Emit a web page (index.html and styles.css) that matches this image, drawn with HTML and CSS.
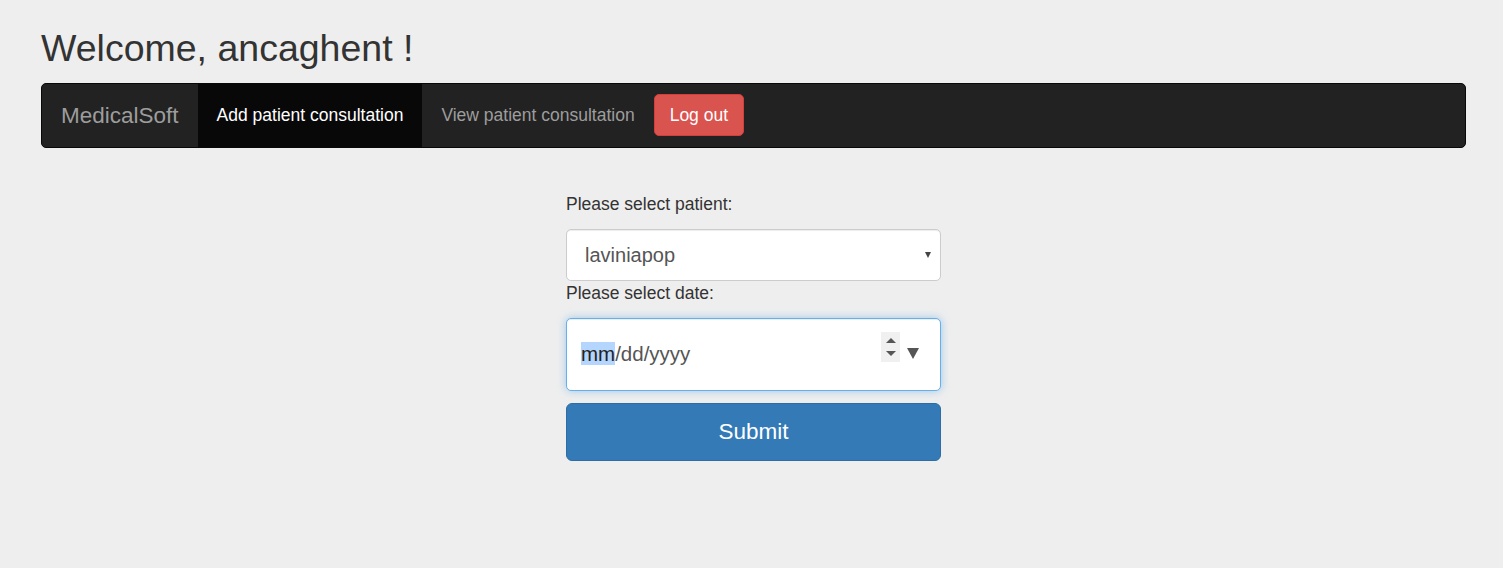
FILE: index.html
```html
<!DOCTYPE html>
<html lang="en">
<head>
<meta charset="utf-8">
<title>MedicalSoft</title>
<link rel="stylesheet" href="styles.css">
</head>
<body>
<div class="container">
  <h2 class="welcome">Welcome, ancaghent !</h2>
  <nav class="navbar">
    <a class="brand" href="#">MedicalSoft</a>
    <ul class="nav">
      <li class="active"><a href="#">Add patient consultation</a></li>
      <li><a href="#">View patient consultation</a></li>
      <li class="btn-item"><button class="btn btn-danger" type="button">Log out</button></li>
    </ul>
  </nav>
  <form class="consult-form">
    <label class="lbl">Please select patient:</label>
    <div class="select-wrap">
      <select class="form-control select-ctl">
        <option>laviniapop</option>
      </select>
    </div>
    <label class="lbl lbl-date">Please select date:</label>
    <div class="form-control date-ctl">
      <span class="date-text"><span class="seg-sel">mm</span>/dd/yyyy</span>
      <span class="spinner"><span class="spin-up"></span><span class="spin-down"></span></span>
      <span class="drop-tri"></span>
    </div>
    <button class="btn btn-primary btn-submit" type="button">Submit</button>
  </form>
</div>
</body>
</html>
```
FILE: styles.css
```css
html, body {
  margin: 0;
  padding: 0;
  background: #eeeeee;
}
body {
  font-family: "Liberation Sans", Arial, Helvetica, sans-serif;
  font-size: 17.5px;
  line-height: 25px;
  color: #333333;
}
.container {
  padding: 0 37px 0 41px;
}
.welcome {
  margin: 28px 0 14px;
  font-size: 37.5px;
  font-weight: 400;
  line-height: 41.25px;
  color: #333333;
}
.navbar {
  display: flex;
  align-items: stretch;
  height: 63px;
  background: #222222;
  border: 1px solid #080808;
  border-radius: 5px;
}
.brand {
  display: flex;
  align-items: center;
  padding: 0 19px;
  font-size: 22.5px;
  color: #9d9d9d;
  text-decoration: none;
  padding-bottom: 1px;
}
.nav {
  display: flex;
  align-items: stretch;
  list-style: none;
  margin: 0;
  padding: 0;
}
.nav li a {
  display: flex;
  align-items: center;
  height: 100%;
  box-sizing: border-box;
  padding: 0 19px;
  color: #9d9d9d;
  text-decoration: none;
}
.nav li.active a {
  background: #080808;
  color: #ffffff;
}
.nav .btn-item {
  display: flex;
  align-items: center;
}
.btn {
  font-family: inherit;
  cursor: pointer;
  border: 1px solid transparent;
}
.btn-danger {
  height: 42px;
  padding: 0 15px;
  font-size: 17.5px;
  line-height: 25px;
  color: #ffffff;
  background: #d9534f;
  border-color: #d43f3a;
  border-radius: 5px;
  margin-bottom: 1px;
}
.consult-form {
  width: 375px;
  margin: 44px auto 0;
  display: flex;
  flex-direction: column;
}
.lbl {
  display: block;
  margin-bottom: 12px;
  line-height: 25px;
}
.lbl-date {
  margin-top: 0;
  margin-bottom: 12px;
}
.form-control {
  box-sizing: border-box;
  width: 100%;
  background: #ffffff;
  border: 1px solid #cccccc;
  border-radius: 5px;
  box-shadow: inset 0 1px 1px rgba(0, 0, 0, 0.075);
  color: #555555;
}
.select-wrap {
  position: relative;
}
.select-wrap::after {
  content: "";
  position: absolute;
  right: 10px;
  top: 23px;
  border-left: 3px solid transparent;
  border-right: 3px solid transparent;
  border-top: 6px solid #444444;
}
.select-ctl {
  display: block;
  height: 52px;
  margin: 0;
  padding: 0 30px 0 18px;
  font-family: inherit;
  font-size: 20px;
  -webkit-appearance: none;
  appearance: none;
  outline: none;
}
.date-ctl {
  display: flex;
  align-items: flex-start;
  height: 73px;
  padding: 0 21px 0 14px;
  border-color: #66afe9;
  box-shadow: inset 0 1px 1px rgba(0, 0, 0, 0.075), 0 0 8px rgba(102, 175, 233, 0.6);
  font-size: 20.5px;
}
.date-text {
  margin-top: 22px;
  line-height: 25px;
  color: #555555;
}
.seg-sel {
  background: #b4d5fd;
  color: #222222;
}
.spinner {
  margin-left: auto;
  margin-top: 13px;
  width: 19px;
  height: 30px;
  background: #f0f0f0;
  display: flex;
  flex-direction: column;
  align-items: center;
}
.spin-up {
  margin-top: 6px;
  border-left: 5px solid transparent;
  border-right: 5px solid transparent;
  border-bottom: 5px solid #555555;
}
.spin-down {
  margin-top: 8px;
  border-left: 5px solid transparent;
  border-right: 5px solid transparent;
  border-top: 5px solid #555555;
}
.drop-tri {
  margin-left: 7px;
  margin-top: 29px;
  border-left: 6.5px solid transparent;
  border-right: 6.5px solid transparent;
  border-top: 11px solid #555555;
}
.btn-submit {
  margin-top: 12px;
  height: 58px;
  width: 100%;
  padding: 0;
  font-size: 22.5px;
  line-height: 30px;
  color: #ffffff;
  background: #337ab7;
  border-color: #2e6da4;
  border-radius: 6px;
}
```
